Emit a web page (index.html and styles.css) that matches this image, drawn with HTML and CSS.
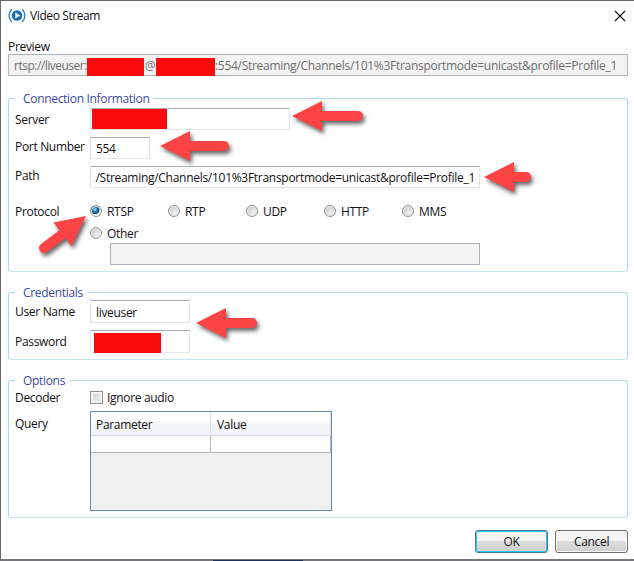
FILE: index.html
```html
<!DOCTYPE html>
<html lang="en">
<head>
<meta charset="utf-8">
<title>Video Stream</title>
<link rel="stylesheet" href="styles.css">
</head>
<body>
<main class="window">
  <header class="titlebar">
    <svg class="logo" width="18" height="16" viewBox="0 0 18 16" fill="none" stroke="#2878b5" stroke-width="1.3">
      <path d="M3.8 1.2Q-1.7 7.5 3.8 14M14.2 1.2Q19.7 7.5 14.2 14"/>
      <circle cx="9" cy="7.5" r="5.3" fill="#1d70b0" stroke="none"/>
      <path d="M7.3 4.5L12.2 7.5L7.3 10.5Z" fill="#fff" stroke="none"/>
    </svg>
    <h1><span>Video Stream</span></h1>
    <svg class="close" width="12" height="12" viewBox="0 0 12 12" stroke="#111" stroke-width="1.2"><path d="M1 1L11 11M11 1L1 11"/></svg>
  </header>

  <div class="preview-label"><span>Preview</span></div>
  <div class="preview">
    <span class="user">rtsp://liveuser:</span><i class="redact r1"></i><span class="at">@</span><i class="redact r2"></i><span class="long">:554/Streaming/Channels/101%3Ftransportmode=unicast&amp;profile=Profile_1</span>
  </div>

  <section class="group connection">
    <h2><span>Connection Information</span></h2>
    <div class="row server"><label><span>Server</span></label><div class="input"><i class="redact r3"></i></div></div>
    <div class="row port"><label><span>Port Number</span></label><div class="input"><span>554</span></div></div>
    <div class="row path"><label><span>Path</span></label><div class="input"><span class="long">/Streaming/Channels/101%3Ftransportmode=unicast&amp;profile=Profile_1</span></div></div>
    <div class="row protocol">
      <label><span>Protocol</span></label>
      <div class="radios">
        <div class="option"><i class="radio on"></i><span>RTSP</span></div>
        <div class="option"><i class="radio"></i><span>RTP</span></div>
        <div class="option"><i class="radio"></i><span>UDP</span></div>
        <div class="option"><i class="radio"></i><span>HTTP</span></div>
        <div class="option"><i class="radio"></i><span>MMS</span></div>
      </div>
    </div>
    <div class="option other"><i class="radio"></i><span>Other</span></div>
    <div class="input disabled"></div>
  </section>

  <section class="group credentials">
    <h2><span>Credentials</span></h2>
    <div class="row"><label><span>User Name</span></label><div class="input"><span>liveuser</span></div></div>
    <div class="row"><label><span>Password</span></label><div class="input"><i class="redact r4"></i></div></div>
  </section>

  <section class="group options">
    <h2><span>Options</span></h2>
    <div class="row decoder"><label><span>Decoder</span></label><div class="option"><i class="checkbox"></i><span>Ignore audio</span></div></div>
    <div class="row query"><label><span>Query</span></label>
      <div class="table">
        <div class="th"><span>Parameter</span></div><div class="th"><span>Value</span></div>
        <div class="td"></div><div class="td"></div>
      </div>
    </div>
  </section>

  <footer class="actions">
    <div class="button primary"><span>OK</span></div>
    <div class="button"><span>Cancel</span></div>
  </footer>

  <svg class="arrows" width="634" height="561" viewBox="0 0 634 561">
    <defs><path id="head" d="M0 0L30 -15V15Z"/></defs>
    <g class="arrow"><use href="#head" x="292" y="116"/><path d="M320 116H358"/></g>
    <g class="arrow"><use href="#head" x="160" y="146"/><path d="M188 146H224"/></g>
    <g class="arrow"><use href="#head" x="484" y="177"/><path d="M512 177H526"/></g>
    <g class="arrow"><use href="#head" x="196" y="323"/><path d="M224 323H252"/></g>
    <g class="arrow"><path class="solid" d="M86 216L53.5 222.5L71.5 246Z"/><path d="M64 233L44 248"/></g>
  </svg>
</main>
<div class="taskbar"></div>
</body>
</html>
```
FILE: styles.css
```css
* { box-sizing: border-box; }
body { margin: 0; background: #fff; }
.window {
  position: relative;
  width: 634px;
  height: 560px;
  overflow: hidden;
  padding: 0 5px 0 7px;
  border: 1px solid #69696b;
  border-right: 0;
  border-bottom-color: #77777a;
  background: #fff;
  color: #111;
  font: 12px/16px "Open Sans", "Noto Sans", sans-serif;
}
.taskbar { height: 1px; background: linear-gradient(90deg, #77777a 213px, #1d3158 213px 303px, #77777a 303px); }
span { white-space: pre; letter-spacing: -0.32px; }
.long { letter-spacing: -0.285px; }
h1, h2 { margin: 0; font: inherit; }

.titlebar { display: flex; align-items: center; height: 29px; }
.titlebar span { letter-spacing: -0.4px; }
.logo { margin-right: 4px; }
.close { margin: 0 3px 0 auto; }
.preview-label { height: 16px; margin-top: 9px; }
.preview {
  display: flex;
  align-items: center;
  width: 620px;
  height: 22px;
  margin-top: -1px;
  padding-left: 5px;
  border: 1px solid #adb2b5;
  background: #f3f3f3;
  color: #6e6e6e;
}
.preview span { margin-top: 1px; }
.preview .user { width: 73px; letter-spacing: -0.5px; }
.at { width: 12px; text-align: center; }
.redact { display: block; flex: none; background: #fd0a0d; }
.r1, .r2 { align-self: end; height: 18px; margin-bottom: -1px; }
.r1 { width: 57px; }
.r2 { width: 59px; }
.r3 { width: 75px; height: 20px; margin-left: -4px; }
.r4 { width: 67px; height: 20px; margin: 2px 0 0 -2px; }

.group {
  width: 620px;
  padding-left: 6px;
  border: 1px solid #a9dce8;
  border-bottom-color: #c5e5ee;
  border-radius: 3px;
}
.group h2 {
  width: max-content;
  height: 16px;
  margin: -8px 0 0 0;
  padding: 0 5px 0 8px;
  background: #fff;
  color: #3d4a9e;
}
.connection { height: 174px; margin-top: 22px; }
.credentials { height: 68px; margin-top: 20px; }
.options { height: 138px; margin-top: 20px; }

.row { display: grid; grid-template-columns: 75px auto; justify-content: start; align-items: center; height: 22px; }
.input {
  display: flex;
  align-items: center;
  height: 22px;
  padding-left: 5px;
  border: 1px solid #e2e6ea;
  border-top-color: #abadb3;
  background: #fff;
}
.input span { margin-top: 2px; }
.server { margin-top: 1px; }
.server label { margin-top: 2px; }
.server .input { width: 200px; }
.port, .path { margin-top: 7px; }
.port label, .path label { margin-top: -3px; }
.port .input { width: 60px; }
.path .input { width: 390px; padding-left: 4.5px; }
.protocol { height: 16px; margin-top: 14px; }
.protocol span, .other span { margin-top: 2px; }
.protocol label { margin-top: 2px; }
.radios { display: grid; grid-template-columns: repeat(5, 78px); }
.option { display: flex; align-items: center; height: 16px; }
.other { margin: 7px 0 0 75px; }
.disabled { width: 370px; margin: 2px 0 0 95px; border-color: #adb2b5; background: #f3f3f3; }
.radio {
  width: 12px;
  height: 12px;
  margin-right: 5px;
  border: 1px solid #8f9396;
  border-radius: 50%;
  background: radial-gradient(circle at 60% 65%, #eee 10%, #c9cbce 70%);
  box-shadow: inset 0 0 0 1px #f4f4f4;
}
.radio.on { background: radial-gradient(circle at 40% 35%, #9be3fa 0, #2384b4 25%, #123f5f 48%, #eee 56%); }

.credentials .row { height: 23px; }
.credentials .row label { margin-top: 1px; }
.credentials .row + .row { margin-top: 7px; }
.credentials .input { width: 100px; height: 23px; }

.credentials h2, .options h2 { margin-bottom: -1px; }
.decoder { height: 16px; }
.decoder label { margin-top: 2px; }
.checkbox {
  width: 13px;
  height: 13px;
  margin-right: 4px;
  border: 1px solid #8e8f8f;
  background: linear-gradient(135deg, #c6cacf, #f5f5f5);
  box-shadow: inset 0 0 0 2px #f4f4f4;
}
.decoder .option span { margin-top: 2px; }
.query { align-items: start; height: 100px; margin-top: 7px; }
.query label { margin-top: 5px; }
.table {
  display: grid;
  grid-template: 24px 17px / 120px 120px;
  align-content: start;
  width: 242px;
  height: 100px;
  border: 1px solid #688caf;
  background: #f0f0f0;
}
.th {
  display: flex;
  align-items: center;
  padding: 3px 0 0 5px;
  border-right: 1px solid #dddee2;
  border-bottom: 1px solid #d5d7dc;
  background: linear-gradient(#fff 35%, #f2f3f7 60%, #f3f4f7);
}
.th + .th { padding-left: 6px; }
.td { border: solid #b8b8ba; border-width: 0 1px 1px 0; background: #fff; }

.actions { display: flex; gap: 7px; margin: 12px 0 0 467px; }
.button {
  display: flex;
  align-items: center;
  justify-content: center;
  width: 73px;
  height: 23px;
  border: 1px solid #707070;
  border-radius: 3px;
  background: linear-gradient(#f3f3f3 50%, #dddddd 50%, #cfcfcf);
  box-shadow: inset 0 0 0 1px #fafafa;
}
.primary { border-color: #3c7f9c; box-shadow: inset 0 0 0 1px #32c5ee; }
.arrows { position: absolute; left: -1px; top: -1px; }
.arrow { fill: #fd4445; stroke: #fd4445; stroke-width: 0; filter: drop-shadow(2px 3px 2px #0009); }
.arrow path:not(.solid) { stroke-width: 10px; stroke-linecap: round; }
```
